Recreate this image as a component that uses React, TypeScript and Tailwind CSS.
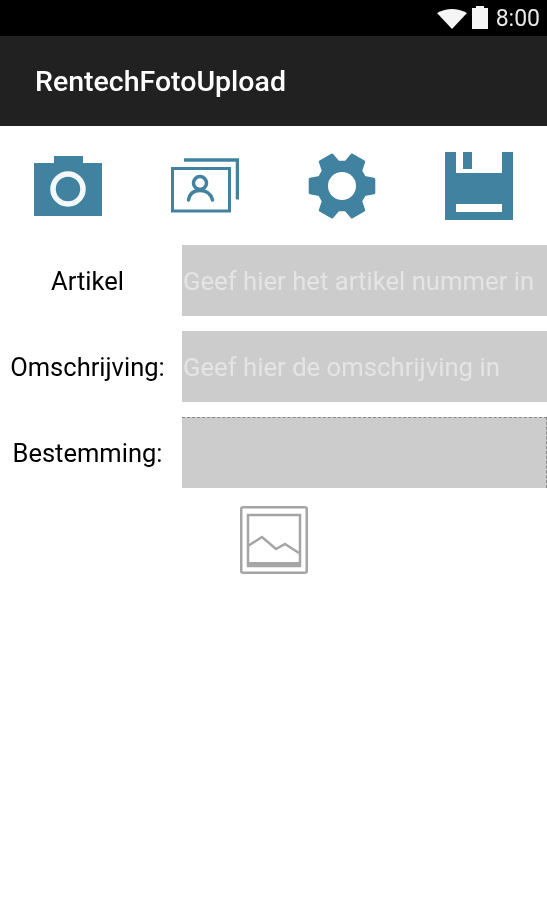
import React from 'react';

const iconColor = '#40829f';

const CameraIcon = () => (
  <svg width="68" height="60" viewBox="0 0 68 60">
    <path d="M20 0h29v7h19v53H0V7h20z" fill={iconColor} />
    <circle cx="34" cy="33" r="15" fill="none" stroke="#f4f8fa" strokeWidth="5.500" />
  </svg>
);

const GalleryIcon = () => (
  <svg width="68" height="55" viewBox="0 0 68 55" fill="none" stroke={iconColor}>
    <path d="M13 2h53.500v39.500" strokeWidth="3.500" />
    <rect x="1.500" y="10.500" width="57" height="42.500" strokeWidth="3" />
    <circle cx="29" cy="25" r="6.500" strokeWidth="3.500" />
    <path d="M17.500 42c1-6 5-9.500 11.500-9.500S40 36 41.500 42" strokeWidth="3.500" strokeLinecap="round" />
  </svg>
);

// six teeth, one pointing right, worked out around the centre
const gearPoints = () => {
  const pts: string[] = [];
  for (let i = 0; i < 6; i++) {
    const a = i * 60;
    [[a - 21, 24], [a - 12, 32.5], [a + 12, 32.5], [a + 21, 24]].forEach(([deg, r]) => {
      const rad = (deg * Math.PI) / 180;
      pts.push(`${(34 + r * Math.cos(rad)).toFixed(1)},${(33 + r * Math.sin(rad)).toFixed(1)}`);
    });
  }
  return pts.join(' ');
};

const GearIcon = () => (
  <svg width="68" height="66" viewBox="0 0 68 66">
    <polygon points={gearPoints()} fill={iconColor} stroke={iconColor} strokeWidth="3" strokeLinejoin="round" />
    <circle cx="34" cy="33" r="14" fill="#ffffff" />
  </svg>
);

const SaveIcon = () => (
  <svg width="68" height="68" viewBox="0 0 68 68">
    <path
      fill={iconColor}
      fillRule="evenodd"
      d="M0 0h11v21h46V0h11v68H0zM18 0h9v17h-9zM11 52v8h46v-8z"
    />
  </svg>
);

const ImagePlaceholder = () => (
  <svg width="68" height="68" viewBox="0 0 68 68" fill="none" stroke="#a5a5a5">
    <rect x="1.250" y="1.250" width="65.500" height="65.500" rx="2" strokeWidth="2.500" />
    <rect x="8" y="9" width="52" height="51" strokeWidth="2.500" />
    <path d="M8 40l14-9 14 12 9-5 14 9" strokeWidth="2.500" />
    <path d="M8 57.500h52" strokeWidth="3" />
  </svg>
);

const Row = ({ label, placeholder, dotted }: { label: string; placeholder?: string; dotted?: boolean }) => (
  <div className="flex items-stretch h-[71px]">
    <div className="w-[175px] flex items-center justify-center pt-[1px] text-[25.500px] text-black">{label}</div>
    <div
      className={`ml-[7px] flex-1 bg-[#cccccc] flex items-center pl-[1px] pt-[1px] text-[25.700px] text-[#e4e4e4] whitespace-nowrap overflow-hidden ${
        dotted ? 'border-t border-r border-dashed border-[#8a8a8a]' : ''
      }`}
    >
      {placeholder}
    </div>
  </div>
);

export default function App() {
  return (
    <div className="w-[547px] h-[900px] bg-white overflow-hidden font-['Roboto',sans-serif] blur-[0.5px]">
      <div className="h-[36px] bg-black flex items-center justify-end pr-[7px] text-white">
        <svg width="30" height="20" viewBox="0 0 30 20" className="mr-[5px] mt-[1px]">
          <path d="M0 4Q15-4 30 4L15 20z" fill="#f5f5f5" />
        </svg>
        <svg width="16" height="23" viewBox="0 0 16 23" className="mr-[8px] mt-[-1px]">
          <path d="M4 0h8v2h4v21H0V2h4z" fill="#f5f5f5" />
        </svg>
        <span className="text-[23px] leading-none text-[#e8e8e8] mt-[1px]">8:00</span>
      </div>
      <div className="h-[90px] bg-[#212121] flex items-center pl-[35px] pt-[2px] text-white text-[28.500px] font-medium">
        RentechFotoUpload
      </div>
      <div className="h-[119px] flex items-center justify-between pl-[34px] pr-[34px]">
        <CameraIcon />
        <GalleryIcon />
        <GearIcon />
        <SaveIcon />
      </div>
      <div className="flex flex-col gap-[15px]">
        <Row label="Artikel" placeholder="Geef hier het artikel nummer in" />
        <Row label="Omschrijving:" placeholder="Geef hier de omschrijving in" />
        <Row label="Bestemming:" dotted />
      </div>
      <div className="mt-[18px] pl-[240px]">
        <ImagePlaceholder />
      </div>
    </div>
  );
}
